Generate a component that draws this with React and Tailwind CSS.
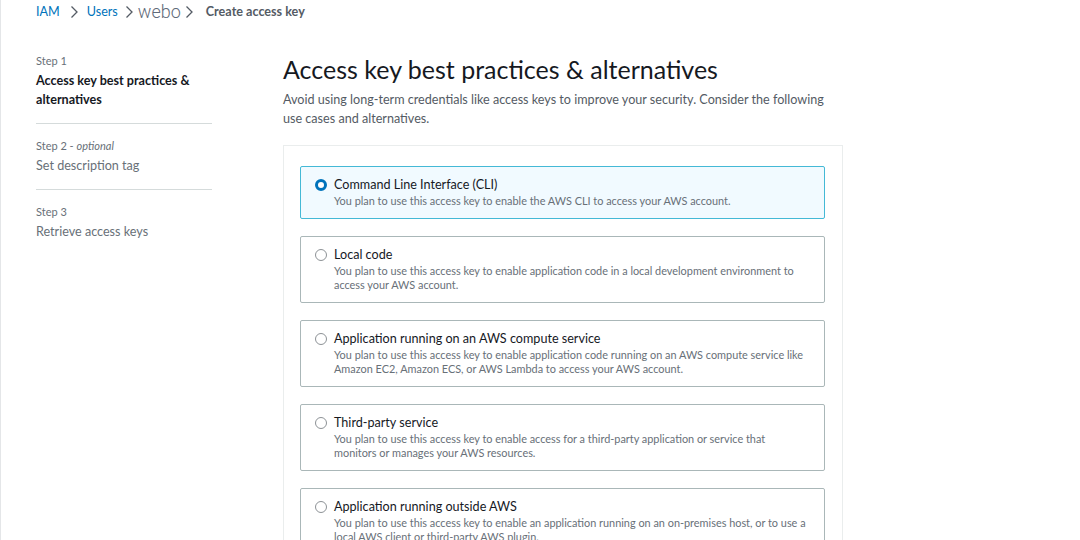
const options = [
  {
    title: 'Command Line Interface (CLI)',
    lines: ['You plan to use this access key to enable the AWS CLI to access your AWS account.'],
    selected: true,
  },
  {
    title: 'Local code',
    lines: [
      'You plan to use this access key to enable application code in a local development environment to',
      'access your AWS account.',
    ],
  },
  {
    title: 'Application running on an AWS compute service',
    lines: [
      'You plan to use this access key to enable application code running on an AWS compute service like',
      'Amazon EC2, Amazon ECS, or AWS Lambda to access your AWS account.',
    ],
  },
  {
    title: 'Third-party service',
    lines: [
      'You plan to use this access key to enable access for a third-party application or service that',
      'monitors or manages your AWS resources.',
    ],
  },
  {
    title: 'Application running outside AWS',
    lines: [
      'You plan to use this access key to enable an application running on an on-premises host, or to use a',
      'local AWS client or third-party AWS plugin.',
    ],
  },
];

const Chevron = () => (
  <svg width="9" height="14" viewBox="0 0 9 14" className="shrink-0">
    <path d="M1.5 1.5 L7 7 L1.5 12.5" fill="none" stroke="#545b64" strokeWidth="1.3" />
  </svg>
);

const Radio = ({ selected }) =>
  selected ? (
    <span className="w-[12px] h-[12px] rounded-full border-[3.5px] border-[#0073bb] bg-white shrink-0" />
  ) : (
    <span className="w-[12px] h-[12px] rounded-full border border-[#8d9296] bg-white shrink-0" />
  );

const Option = ({ title, lines, selected }) => (
  <div
    className={
      'flex gap-[7px] pl-[14px] pr-3 pt-[9px] pb-[10px] border rounded-[2px] ' +
      (selected ? 'bg-[#f1faff] border-[#44b9d6]' : 'bg-white border-[#aab7b8]')
    }
  >
    <div className="h-[18px] flex items-center">
      <Radio selected={selected} />
    </div>
    <div>
      <div className="text-[12.6px] leading-[18px] text-[#16191f]">{title}</div>
      <div className="text-[10.9px] leading-[14px] text-[#687078] whitespace-nowrap">
        {lines.map((l, i) => (
          <div key={i}>{l}</div>
        ))}
      </div>
    </div>
  </div>
);

export default function App() {
  return (
    <div className="h-[540px] overflow-hidden bg-white border-l border-[#e4e6e8] font-['Lato','Liberation_Sans',sans-serif]">
      {/* breadcrumb */}
      <div className="flex items-center h-[24px] pl-[35px] text-[12.6px] text-[#0073bb]">
        <span>IAM</span>
        <span className="ml-[10px] mr-[8px] flex"><Chevron /></span>
        <span>Users</span>
        <span className="ml-[7px] mr-[4px] flex"><Chevron /></span>
        <span className="text-[18px] font-light text-[#5f6b7a] font-['Roboto',sans-serif] leading-none">webo</span>
        <span className="ml-[4px] mr-[12px] flex"><Chevron /></span>
        <span className="font-bold text-[#545b64]">Create access key</span>
      </div>

      <div className="flex pl-[35px] pt-[29px]">
        {/* steps */}
        <nav className="w-[176px] shrink-0">
          <div className="text-[11px] leading-[16px] text-[#687078]">Step 1</div>
          <div className="text-[12.6px] leading-[19px] font-bold text-[#16191f] pt-[2px]">
            Access key best practices &amp; alternatives
          </div>
          <div className="border-t border-[#d5dbdb] mt-[14px] pt-[14px]">
            <div className="text-[11px] leading-[16px] text-[#687078]">
              Step 2 - <i>optional</i>
            </div>
            <div className="text-[12.6px] leading-[19px] text-[#687078] pt-[2px]">Set description tag</div>
          </div>
          <div className="border-t border-[#d5dbdb] mt-[14px] pt-[14px]">
            <div className="text-[11px] leading-[16px] text-[#687078]">Step 3</div>
            <div className="text-[12.6px] leading-[19px] text-[#687078] pt-[2px]">Retrieve access keys</div>
          </div>
        </nav>

        {/* main */}
        <main className="ml-[71px] w-[560px]">
          <h1 className="text-[25px] leading-[30px] text-[#16191f] pt-[1px]">
            Access key best practices &amp; alternatives
          </h1>
          <p className="text-[12.6px] leading-[19px] text-[#545b64] mt-[6px] whitespace-nowrap">
            Avoid using long-term credentials like access keys to improve your security. Consider the following
            <br />
            use cases and alternatives.
          </p>

          <div className="mt-[17px] border border-[#eaeded] pl-4 pr-[17px] pt-[20px] flex flex-col gap-[17px]">
            {options.map((o) => (
              <Option key={o.title} {...o} />
            ))}
          </div>
        </main>
      </div>
    </div>
  );
}
